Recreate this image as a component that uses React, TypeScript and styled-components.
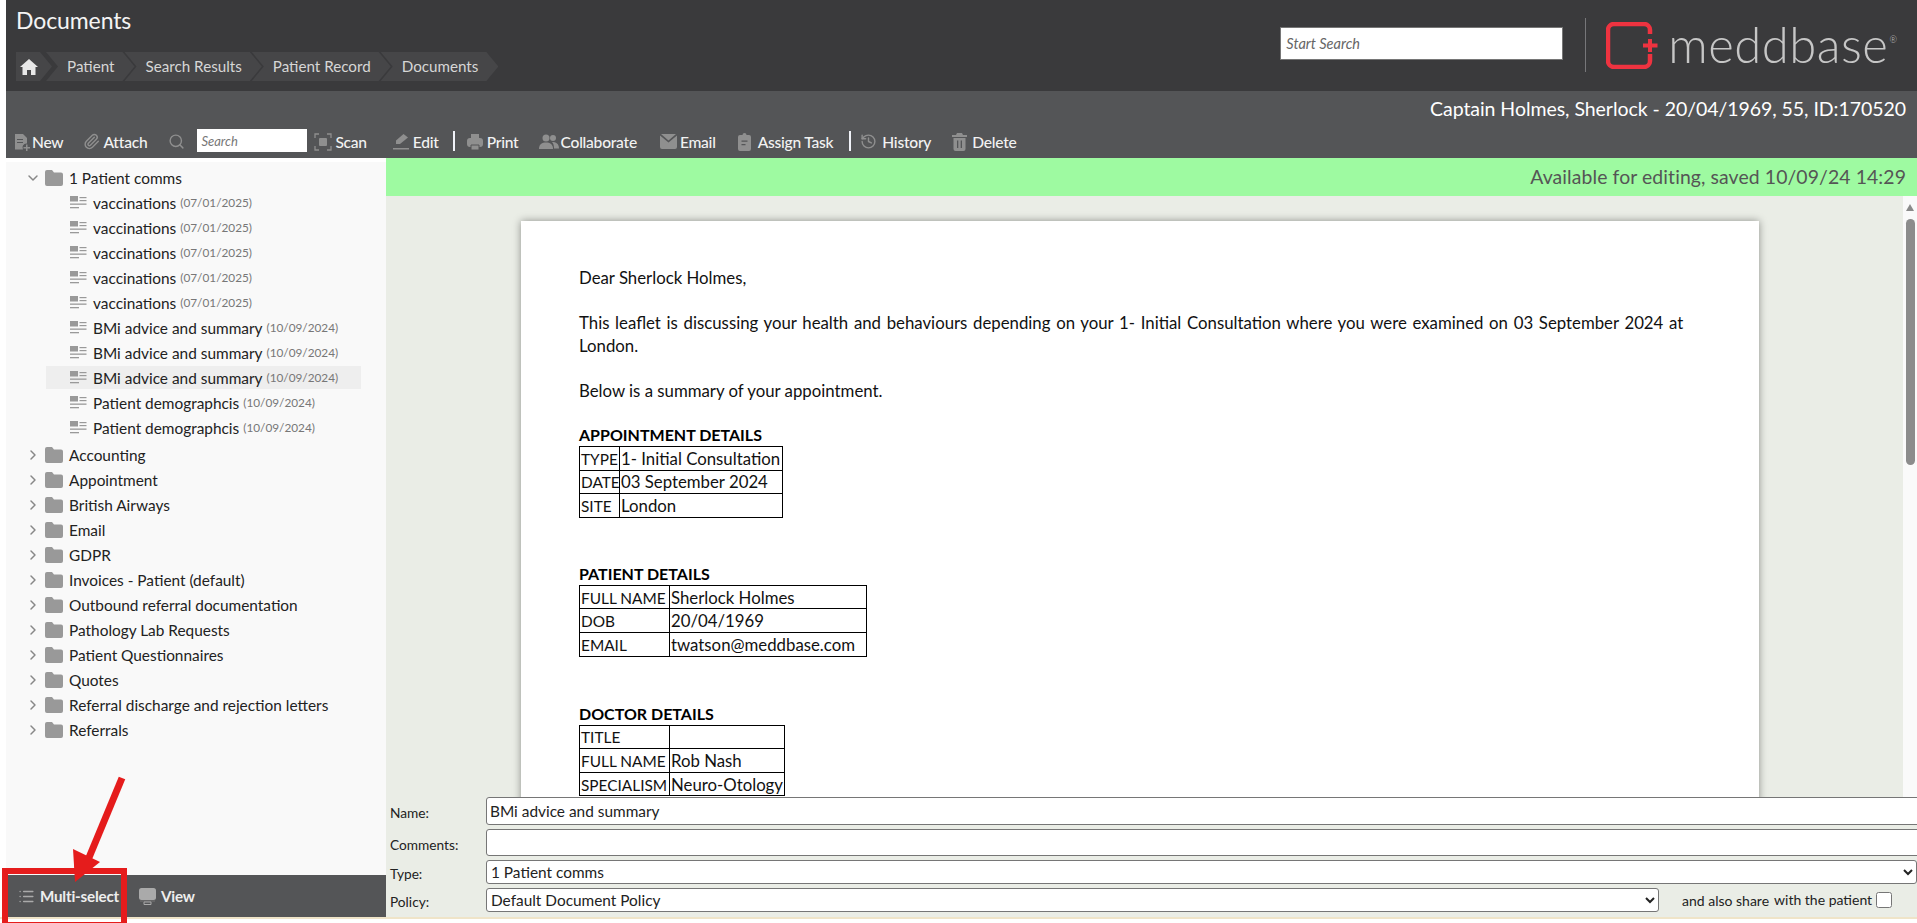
import React from "react";
import styled, { createGlobalStyle } from "styled-components";
import { ChevronDown, ChevronRight, History, List, Paperclip, Search } from "lucide-react";

const Global = createGlobalStyle`
  html, body { margin: 0; padding: 0; background: #fff; overflow: hidden; }
  body { font-family: Lato, "Liberation Sans", sans-serif; }
  * { box-sizing: border-box; }
`;
const Page = styled.div`
  position: relative; width: 1917px; height: 923px; overflow: hidden; padding-left: 6px;
  display: flex; flex-direction: column; background: #fff;
`;
const Header = styled.header`
  height: 91px; flex: none; background: #3a3a3c; display: flex; justify-content: space-between;
`;
const HeaderLeft = styled.div`padding: 6px 0 0 10px; display: flex; flex-direction: column;`;
const Title = styled.h1`
  margin: 0; font-size: 23px; line-height: 28px; font-weight: 400; color: #f4f4f4; letter-spacing: -0.1px;
`;
const Crumbs = styled.nav`display: flex; margin-top: 18px; height: 29px;`;
const Crumb = styled.span`
  height: 29px; display: flex; align-items: center; margin-left: -10px; padding: 0 20px 2px 21px;
  font-size: 15.2px; color: #d6d6d6; background: #464648; white-space: nowrap;
  clip-path: polygon(0 0, calc(100% - 12px) 0, 100% 50%, calc(100% - 12px) 100%, 0 100%, 12px 50%);
`;
const FirstCrumb = styled(Crumb)`margin-left: -6px;`;
const HomeCrumb = styled.span`
  height: 29px; width: 36px; display: flex; align-items: center; padding-left: 4px; background: #464648;
  clip-path: polygon(0 0, calc(100% - 12px) 0, 100% 50%, calc(100% - 12px) 100%, 0 100%);
`;
const HeaderRight = styled.div`display: flex; align-items: center; padding-right: 20px;`;
const StartSearch = styled.input`
  width: 283px; height: 33px; border: 1px solid #767676; background: #fff; padding: 0 5px;
  font: italic 14.5px Lato, sans-serif; color: #444; margin-bottom: 5px;
  &::placeholder { color: #666; }
`;
const Divider = styled.div`width: 1px; height: 54px; background: #77777a; margin: 0 20px 2px 22px;`;
const LogoMark = styled.svg`flex: none; margin-bottom: 1px;`;
const LogoText = styled.span`
  font-size: 49px; font-weight: 300; color: #c6c6c6; line-height: 50px; margin: 0 0 4px 10px; letter-spacing: 0.5px;
`;
const Registered = styled.sup`font-size: 9px; vertical-align: 20px; line-height: 0; margin-left: 1px; letter-spacing: 0;`;

const Toolbar = styled.div`
  height: 67px; flex: none; background: #545557; display: flex; flex-direction: column; justify-content: space-between;
`;
const PatientLine = styled.div`
  text-align: right; padding: 5px 11px 0 0; color: #fff; font-size: 19.5px; line-height: 26px; letter-spacing: -0.05px;
`;
const ToolRow = styled.div`display: flex; align-items: center; height: 33px; padding-bottom: 2px;`;
const Tool = styled.span<{ $left: number; $gap?: number }>`
  display: inline-flex; align-items: center; gap: ${p => p.$gap ?? 3}px; margin-left: ${p => p.$left}px; padding-top: 2px;
  color: #f2f2f2; font-size: 15.6px; font-weight: 500; white-space: nowrap; letter-spacing: -0.25px;
  svg { flex: none; }
`;
const ToolSearch = styled.input`
  width: 110px; height: 23px; border: 0; padding: 0 4px; margin-left: 12px; background: #fff;
  font: italic 13px Lato, sans-serif;
  &::placeholder { color: #777; }
`;
const ToolSep = styled.i<{ $left: number }>`
  display: block; width: 2px; height: 20px; background: #f0f2f8; margin-left: ${p => p.$left}px;
`;

const Body = styled.div`flex: 1; min-height: 0; display: flex;`;
const Sidebar = styled.aside`width: 380px; flex: none; display: flex; flex-direction: column; padding-top: 4px;`;
const Tree = styled.div`flex: 1; background: #f9f9f9; padding: 3px 0 0 0; font-size: 15.4px; color: #222;`;
const FolderRow = styled.div`
  height: 25px; display: flex; align-items: center; padding-left: 19px;
  white-space: nowrap; svg { flex: none; }
`;
const TreeGap = styled.div`height: 2px;`;
const FolderName = styled.span`margin-left: 6px;`;
const DocRow = styled.div<{ $selected?: boolean }>`
  height: 25px; display: flex; align-items: center; white-space: nowrap; margin-left: 40px; width: 315px; padding-left: 24px;
  position: relative;
  &::before {
    content: ""; position: absolute; left: 0; right: 0; top: 1px; bottom: 1px; z-index: 0;
    background: ${p => (p.$selected ? "#eeeeee" : "transparent")};
  }
  > * { position: relative; }
`;
const DocName = styled.span`margin-left: 6px;`;
const DocDate = styled.span`margin-left: 4px; font-size: 11.8px; color: #777;`;
const BottomBar = styled.div`
  height: 42px; flex: none; background: #545557; display: flex; align-items: center; padding-left: 12px;
  color: #eee; font-size: 15.2px; font-weight: 700;
`;
const BarButton = styled.span<{ $left?: number }>`
  display: inline-flex; align-items: center; gap: 5px; margin-left: ${p => p.$left || 0}px; letter-spacing: -0.2px;
`;
const Main = styled.main`flex: 1; min-width: 0; display: flex; flex-direction: column; background: #eaede6;`;
const Status = styled.div`
  height: 38px; flex: none; background: #9efaa1; color: #555; text-align: right; font-size: 19.4px; line-height: 38px;
  padding-right: 11px; letter-spacing: 0.1px;
`;
const Viewer = styled.div`flex: 1; min-height: 0; display: flex; overflow: hidden;`;
const ViewerPane = styled.div`flex: 1; min-width: 0; padding: 25px 0 0 135px; overflow: hidden;`;
const Paper = styled.article`
  width: 1238px; height: 800px; background: #fff; box-shadow: 0 0 8px rgba(0, 0, 0, 0.4);
  padding: 45px 58px; font-size: 16.8px; line-height: 23px; color: #111;
`;
const Para = styled.p<{ $ws?: number }>`margin: 0 0 22px; white-space: nowrap; word-spacing: ${p => p.$ws || 0}px;`;
const Heading = styled.h2<{ $top?: number }>`
  margin: ${p => p.$top || 0}px 0 0; font-size: 16px; line-height: 22px; font-weight: 700; color: #000;
`;
const DocTable = styled.table<{ $w: number }>`
  border-collapse: collapse; width: ${p => p.$w}px; table-layout: fixed;
  td { border: 1px solid #000; height: 23.6px; padding: 1px 1px 0; line-height: 20px; white-space: nowrap; overflow: hidden; font-size: 16.8px; }
`;
const LabelCell = styled.td<{ $w: number }>`
  width: ${p => p.$w}px;
  table & { font-size: 15.4px; }
`;
const ScrollTrack = styled.div`position: relative; width: 14px; flex: none; background: #fafafa;`;
const ScrollArrow = styled.i`
  position: absolute; left: 3px; top: 8px; width: 0; height: 0;
  border-left: 4.5px solid transparent; border-right: 4.5px solid transparent; border-bottom: 7px solid #8a8a8a;
`;
const ScrollThumb = styled.i`
  position: absolute; left: 3px; top: 23px; width: 9px; height: 246px; border-radius: 5px; background: #8c8c8c;
`;
const Form = styled.form`
  height: 120px; flex: none; display: grid; grid-template-columns: 96px 1fr; grid-template-rows: 28px 27px 24px 24px;
  row-gap: 4px; padding-left: 4px; font-size: 13.7px; color: #222; align-items: center;
`;
const FieldLabel = styled.label`padding-top: 3px;`;
const TextField = styled.input<{ $h: number }>`
  width: calc(100% + 12px); height: ${p => p.$h}px; border: 1px solid #767676; border-radius: 3px; padding: 0 3px;
  font: 15.4px Lato, sans-serif; color: #222; background: #fff;
`;
const SelectField = styled.select<{ $w?: string }>`
  width: ${p => p.$w || "100%"}; height: 24px; border: 1px solid #767676; border-radius: 3px; background: #fff;
  font: 15.4px Lato, sans-serif; color: #222;
`;
const PolicyRow = styled.div`display: flex; align-items: center;`;
const ShareText = styled.span`margin-left: 23px; font-size: 14px; white-space: nowrap;`;
const ShareGap = styled.span`margin-left: 5px; font-size: 14px; white-space: nowrap; position: relative; top: -1px;`;
const ShareBox = styled.input`width: 16px; height: 16px; margin: 0 0 0 4px;`;
const FootLine = styled.div`height: 6px; flex: none; margin-left: -6px; background: linear-gradient(#efe4c8 0 2px, #fff 2px);`;
const RedBox = styled.div`
  position: absolute; left: 2px; top: 868px; width: 125px; height: 60px; border: 6px solid #e51c1c; pointer-events: none;
`;
const ArrowOverlay = styled.svg`position: absolute; left: 60px; top: 770px; pointer-events: none;`;

const G = "#8f8f8f";
const Ico = ({ w = 18, h = 18, vb = "0 0 18 18", children }: { w?: number; h?: number; vb?: string; children: React.ReactNode }) => (
  <svg width={w} height={h} viewBox={vb} fill={G}>{children}</svg>
);
const HomeIcon = () => (
  <svg width="18" height="16" viewBox="0 0 18 16" fill="#e8e8e8">
    <path d="M9 0 18 8h-2.500v8h-4.500v-5H7v5H2.500V8H0z" />
  </svg>
);
const NewIcon = () => (
  <Ico><path d="M2 1h8l4 4v5.500a4 4 0 0 0-4 6H2z" /><path d="M13 11.500h1.500V14H17v1.500h-2.500V18H13v-2.500h-2.500V14H13z" /><path d="M4 6h6v1H4zM4 9h6v1H4z" fill="#545557" /></Ico>
);
const ScanIcon = () => (
  <Ico><path d="M1 5V1h4M13 1h4v4M17 13v4h-4M5 17H1v-4" fill="none" stroke={G} strokeWidth="1.3" /><rect x="5" y="5" width="8" height="8" rx="1" /></Ico>
);
const EditIcon = () => (
  <Ico><path d="M11.500 1 16 4.500 8 11H4v-3.500z" /><rect x="1" y="15" width="16" height="1.500" /></Ico>
);
const PrintIcon = () => (
  <Ico><path d="M5 1h8v4H5z" /><rect x="1" y="5" width="16" height="9" rx="3" /><path d="M5 12h8v5H5z" stroke="#545557" strokeWidth="1" /></Ico>
);
const PeopleIcon = () => (
  <svg width="20" height="16" viewBox="0 0 20 16" fill={G}>
    <circle cx="7" cy="4" r="3.500" /><circle cx="14" cy="4" r="3" />
    <path d="M0 15c0-5 3-6.500 7-6.500s7 1.500 7 6.500z" /><path d="M13 8c4 0 7 1.500 7 6.500h-5c0-3-.5-5-2-6.500z" />
  </svg>
);
const MailIcon = () => (
  <svg width="17" height="15" viewBox="0 0 17 15" fill={G}>
    <path d="M1 0h15l-7.500 6.500zM0 1.500l8.500 7 8.500-7V13a2 2 0 0 1-2 2H2a2 2 0 0 1-2-2z" />
  </svg>
);
const TaskIcon = () => (
  <svg width="13" height="18" viewBox="0 0 13 18" fill={G}>
    <path d="M2 2h2.500a2 2 0 0 1 4 0H11a2 2 0 0 1 2 2v12a2 2 0 0 1-2 2H2a2 2 0 0 1-2-2V4a2 2 0 0 1 2-2z" />
    <path d="M3.500 7.500h6v1.300h-6zM3.500 11h4v1.300h-4z" fill="#545557" />
  </svg>
);
const TrashIcon = () => (
  <svg width="15" height="18" viewBox="0 0 15 18" fill={G}>
    <path d="M5 0h5l1 2h4v2H0V2h4z" /><path d="M1.500 5h12v11a2 2 0 0 1-2 2h-8a2 2 0 0 1-2-2z" />
    <path d="M5 7.500h1.300V15H5zM8.700 7.500H10V15H8.700z" fill="#545557" />
  </svg>
);
const FolderIcon = () => (
  <svg width="18" height="16" viewBox="0 0 18 16" fill="#999">
    <path d="M2 0h5l2 2.500h7a2 2 0 0 1 2 2V14a2 2 0 0 1-2 2H2a2 2 0 0 1-2-2V2a2 2 0 0 1 2-2z" />
  </svg>
);
const DocIcon = () => (
  <svg width="17" height="13" viewBox="0 0 17 13" fill="#999">
    <rect x="0" y="0" width="8" height="5.500" /><rect x="9.500" y="1" width="7" height="1.200" /><rect x="9.500" y="4" width="7" height="1.200" />
    <rect x="0" y="7.500" width="16.500" height="1.300" /><rect x="0" y="11" width="9" height="1.300" />
  </svg>
);
const ViewIcon = () => (
  <svg width="17" height="17" viewBox="0 0 17 17" fill="#aaa">
    <rect x="0" y="0" width="17" height="12" rx="2.500" /><rect x="1" y="12.500" width="15" height="1" fill="#777" /><path d="M5 14h7v2.500H5z" fill="none" stroke="#aaa" />
  </svg>
);
const Chevron = ({ open }: { open?: boolean }) =>
  open ? <ChevronDown size={16} color="#888" strokeWidth={2.2} /> : <ChevronRight size={16} color="#888" strokeWidth={2.2} />;
const Spacer = styled.span`width: 4px; flex: none;`;

const docs = [
  ["vaccinations", "07/01/2025"], ["vaccinations", "07/01/2025"], ["vaccinations", "07/01/2025"],
  ["vaccinations", "07/01/2025"], ["vaccinations", "07/01/2025"],
  ["BMi advice and summary", "10/09/2024"], ["BMi advice and summary", "10/09/2024"], ["BMi advice and summary", "10/09/2024"],
  ["Patient demographcis", "10/09/2024"], ["Patient demographcis", "10/09/2024"],
];
const folders = [
  "Accounting", "Appointment", "British Airways", "Email", "GDPR", "Invoices - Patient (default)",
  "Outbound referral documentation", "Pathology Lab Requests", "Patient Questionnaires", "Quotes",
  "Referral discharge and rejection letters", "Referrals",
];

const KV = ({ w, rows, table }: { w: number; rows: string[][]; table: number }) => (
  <DocTable $w={table}>
    <tbody>
      {rows.map(([a, b], i) => (
        <tr key={i}><LabelCell $w={w}>{a}</LabelCell><td>{b}</td></tr>
      ))}
    </tbody>
  </DocTable>
);

export default function App() {
  return (
    <Page>
      <Global />
      <Header>
        <HeaderLeft>
          <Title>Documents</Title>
          <Crumbs>
            <HomeCrumb><HomeIcon /></HomeCrumb>
            <FirstCrumb>Patient</FirstCrumb>
            <Crumb>Search Results</Crumb>
            <Crumb>Patient Record</Crumb>
            <Crumb>Documents</Crumb>
          </Crumbs>
        </HeaderLeft>
        <HeaderRight>
          <StartSearch placeholder="Start Search" />
          <Divider />
          <LogoMark width="52" height="47" viewBox="0 0 52 47" fill="none">
            <path d="M44 12V8a6 6 0 0 0-6-6H8a6 6 0 0 0-6 6v31a6 6 0 0 0 6 6h30a6 6 0 0 0 6-6v-7" stroke="#ee3340" strokeWidth="4.500" />
            <path d="M42 17h4v4.500h5.500v4H46V30h-4v-4.500h-5v-4h5z" fill="#ee3340" />
          </LogoMark>
          <LogoText>meddbase<Registered>®</Registered></LogoText>
        </HeaderRight>
      </Header>
      <Toolbar>
        <PatientLine>Captain Holmes, Sherlock - 20/04/1969, 55, ID:170520</PatientLine>
        <ToolRow>
          <Tool $left={7} $gap={1}><NewIcon />New</Tool>
          <Tool $left={20}><Paperclip size={17} color={G} />Attach</Tool>
          <Tool $left={21}><Search size={17} color={G} /></Tool>
          <ToolSearch placeholder="Search" />
          <Tool $left={7}><ScanIcon />Scan</Tool>
          <Tool $left={25}><EditIcon />Edit</Tool>
          <ToolSep $left={14} />
          <Tool $left={11}><PrintIcon />Print</Tool>
          <Tool $left={20} $gap={2}><PeopleIcon />Collaborate</Tool>
          <Tool $left={23}><MailIcon />Email</Tool>
          <Tool $left={22} $gap={7}><TaskIcon />Assign Task</Tool>
          <ToolSep $left={16} />
          <Tool $left={9} $gap={5}><History size={17} color={G} />History</Tool>
          <Tool $left={21} $gap={5}><TrashIcon />Delete</Tool>
        </ToolRow>
      </Toolbar>
      <Body>
        <Sidebar>
          <Tree>
            <FolderRow><Chevron open /><Spacer /><FolderIcon /><FolderName>1 Patient comms</FolderName></FolderRow>
            {docs.map(([n, d], i) => (
              <DocRow key={i} $selected={i === 7}><DocIcon /><DocName>{n}</DocName><DocDate>({d})</DocDate></DocRow>
            ))}
            <TreeGap />
            {folders.map(f => (
              <FolderRow key={f}><Chevron /><Spacer /><FolderIcon /><FolderName>{f}</FolderName></FolderRow>
            ))}
          </Tree>
          <BottomBar>
            <BarButton><List size={17} color="#aaa" />Multi-select</BarButton>
            <BarButton $left={20}><ViewIcon />View</BarButton>
          </BottomBar>
        </Sidebar>
        <Main>
          <Status>Available for editing, saved 10/09/24 14:29</Status>
          <Viewer>
            <ViewerPane>
              <Paper>
                <Para>Dear Sherlock Holmes,</Para>
                <Para $ws={1.4}>This leaflet is discussing your health and behaviours depending on your 1- Initial Consultation where you were examined on 03 September 2024 at<br />London.</Para>
                <Para>Below is a summary of your appointment.</Para>
                <Heading>APPOINTMENT DETAILS</Heading>
                <KV w={40} table={204} rows={[["TYPE", "1- Initial Consultation"], ["DATE", "03 September 2024"], ["SITE", "London"]]} />
                <Heading $top={45}>PATIENT DETAILS</Heading>
                <KV w={90} table={288} rows={[["FULL NAME", "Sherlock Holmes"], ["DOB", "20/04/1969"], ["EMAIL", "twatson@meddbase.com"]]} />
                <Heading $top={46}>DOCTOR DETAILS</Heading>
                <KV w={90} table={206} rows={[["TITLE", ""], ["FULL NAME", "Rob Nash"], ["SPECIALISM", "Neuro-Otology"]]} />
              </Paper>
            </ViewerPane>
            <ScrollTrack><ScrollArrow /><ScrollThumb /></ScrollTrack>
          </Viewer>
          <Form>
            <FieldLabel>Name:</FieldLabel>
            <TextField $h={28} defaultValue="BMi advice and summary" />
            <FieldLabel>Comments:</FieldLabel>
            <TextField $h={27} />
            <FieldLabel>Type:</FieldLabel>
            <SelectField defaultValue="1"><option value="1">1 Patient comms</option></SelectField>
            <FieldLabel>Policy:</FieldLabel>
            <PolicyRow>
              <SelectField $w="1173px" defaultValue="d"><option value="d">Default Document Policy</option></SelectField>
              <ShareText>and also share</ShareText>
              <ShareGap>with the patient</ShareGap>
              <ShareBox type="checkbox" />
            </PolicyRow>
          </Form>
        </Main>
      </Body>
      <FootLine />
      <RedBox />
      <ArrowOverlay width="80" height="120" viewBox="0 0 80 120">
        <path d="M62 8 28 90" stroke="#e51c1c" strokeWidth="7" />
        <path d="M13 79 40 92 15 112z" fill="#e51c1c" />
      </ArrowOverlay>
    </Page>
  );
}
